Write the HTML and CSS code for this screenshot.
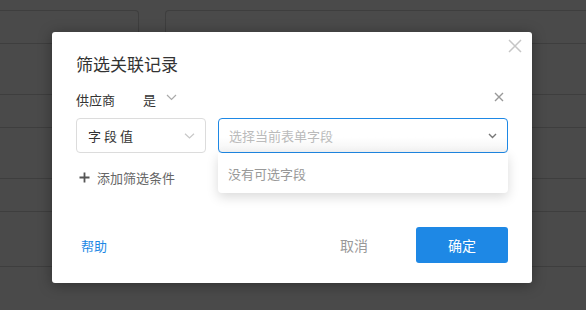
FILE: index.html
```html
<!DOCTYPE html>
<html lang="zh-CN">
<head>
<meta charset="utf-8">
<title>筛选关联记录</title>
<link rel="stylesheet" href="styles.css">
</head>
<body>
<div class="page">
  <div class="board">
    <div class="card card-left">
      <div class="row r1"></div><div class="row r2"></div><div class="row r1"></div><div class="row r2"></div><div class="row r1"></div><div class="row r3"></div>
    </div>
    <div class="card card-right">
      <div class="row r1"></div><div class="row r2"></div><div class="row r1"></div><div class="row r2"></div><div class="row r1"></div><div class="row r3"></div>
    </div>
  </div>
</div>

<div class="modal">
  <button class="modal-close" aria-label="关闭">
    <svg width="14" height="14" viewBox="0 0 14 14"><path d="M1 1L13 13M13 1L1 13" stroke="#c6c6c6" stroke-width="1.5" fill="none"/></svg>
  </button>
  <div class="title">筛选关联记录</div>

  <div class="cond-head">
    <span class="field-name">供应商</span>
    <span class="op">是</span>
    <svg class="op-caret" width="11" height="7" viewBox="0 0 11 7"><path d="M1 1L5.5 5.5L10 1" stroke="#aaa" stroke-width="1.2" fill="none"/></svg>
    <span class="spacer"></span>
    <svg class="cond-del" width="10" height="10" viewBox="0 0 10 10"><path d="M1 1L9 9M9 1L1 9" stroke="#999" stroke-width="1.4" fill="none"/></svg>
  </div>

  <div class="cond-row">
    <div class="select select-type">
      <span class="select-text">字段值</span>
      <svg width="11" height="6" viewBox="0 0 11 6"><path d="M1 0.8L5.5 5L10 0.8" stroke="#c8c8c8" stroke-width="1.2" fill="none"/></svg>
    </div>
    <div class="select select-field">
      <span class="select-placeholder">选择当前表单字段</span>
      <svg width="9" height="6" viewBox="0 0 9 6"><path d="M1 1L4.5 4.5L8 1" stroke="#777" stroke-width="1.4" fill="none"/></svg>
      <div class="dropdown">没有可选字段</div>
    </div>
  </div>

  <div class="add">
    <svg width="11" height="11" viewBox="0 0 11 11"><path d="M5.5 0.5V10.5M0.5 5.5H10.5" stroke="#555" stroke-width="1.8" fill="none"/></svg>
    <span>添加筛选条件</span>
  </div>

  <div class="footer">
    <a class="help">帮助</a>
    <span class="cancel">取消</span>
    <button class="ok">确定</button>
  </div>
</div>
</body>
</html>
```

FILE: styles.css
```css
html, body {
  margin: 0;
  padding: 0;
}
body {
  width: 586px;
  height: 310px;
  overflow: hidden;
  background: #4a4a4a;
  font-family: "Noto Sans CJK SC", "Noto Sans", sans-serif;
  position: relative;
}
.page {
  padding-top: 10px;
}
.board {
  display: flex;
  justify-content: space-between;
}
.card {
  border-top: 1px solid #3e3e3e;
}
.card-left {
  width: 138px;
  border-right: 1px solid #3e3e3e;
  border-top-right-radius: 4px;
}
.card-right {
  width: 420px;
  border-left: 1px solid #3e3e3e;
  border-top-left-radius: 4px;
}
.row {
  border-bottom: 1px solid #3e3e3e;
}
.r1 { height: 32px; }
.r2 { height: 50px; }
.r3 { height: 54px; }

.modal {
  position: absolute;
  left: 52px;
  top: 32px;
  width: 480px;
  height: 251px;
  box-sizing: border-box;
  padding: 0 24px;
  background: #fff;
  border-radius: 3px;
  box-shadow: 0 2px 14px rgba(0, 0, 0, 0.35);
  display: flex;
  flex-direction: column;
}
.modal-close {
  position: absolute;
  right: 10px;
  top: 7px;
  width: 14px;
  height: 14px;
  padding: 0;
  border: 0;
  background: none;
  display: block;
}
.modal-close svg { display: block; }
.title {
  margin-top: 20px;
  font-size: 17px;
  line-height: 23px;
  color: #333;
}
.cond-head {
  margin-top: 13px;
  height: 22px;
  display: flex;
  align-items: center;
  font-size: 13px;
  color: #333;
}
.field-name {
  width: 67px;
}
.op {
  color: #333;
}
.op-caret {
  margin-left: 10px;
  margin-top: -3px;
}
.spacer { flex: 1; }
.cond-del {
  margin-right: 4px;
  margin-top: -4px;
}
.cond-row {
  margin-top: 8px;
  height: 35px;
  display: flex;
  gap: 12px;
}
.select {
  box-sizing: border-box;
  height: 35px;
  border: 1px solid #dcdcdc;
  border-radius: 4px;
  display: flex;
  align-items: center;
  font-size: 13px;
  position: relative;
}
.select-type {
  width: 130px;
  padding: 0 10px 0 11px;
  justify-content: space-between;
  color: #333;
}
.select-text {
  font-size: 13px;
  letter-spacing: 3px;
}
.select-field {
  flex: 1;
  padding: 0 10px 0 10px;
  justify-content: space-between;
  border-color: #1e88e5;
  background: linear-gradient(#fff 55%, #f4f4f4);
}
.select-placeholder {
  color: #bbb;
}
.dropdown {
  position: absolute;
  left: -1px;
  right: -1px;
  top: 34px;
  height: 40px;
  box-sizing: border-box;
  padding-left: 10px;
  display: flex;
  align-items: center;
  background: #fff;
  color: #999;
  font-size: 13px;
  border-radius: 0 0 4px 4px;
  box-shadow: 0 4px 12px rgba(0, 0, 0, 0.15);
}
.add {
  margin-top: 14px;
  height: 20px;
  display: flex;
  align-items: center;
  padding-left: 3px;
  font-size: 13px;
  color: #666;
}
.add svg {
  margin-right: 7px;
}
.footer {
  margin-top: auto;
  margin-bottom: 20px;
  height: 36px;
  display: flex;
  align-items: center;
}
.help {
  margin-left: 5px;
  color: #1e88e5;
  font-size: 13px;
}
.cancel {
  margin-left: auto;
  margin-right: 48px;
  color: #999;
  font-size: 14px;
}
.ok {
  width: 92px;
  height: 36px;
  border: 0;
  border-radius: 3px;
  background: #1e88e5;
  color: #fff;
  font-family: "Noto Sans CJK SC", "Noto Sans", sans-serif;
  font-size: 14px;
  padding: 0;
}
```
